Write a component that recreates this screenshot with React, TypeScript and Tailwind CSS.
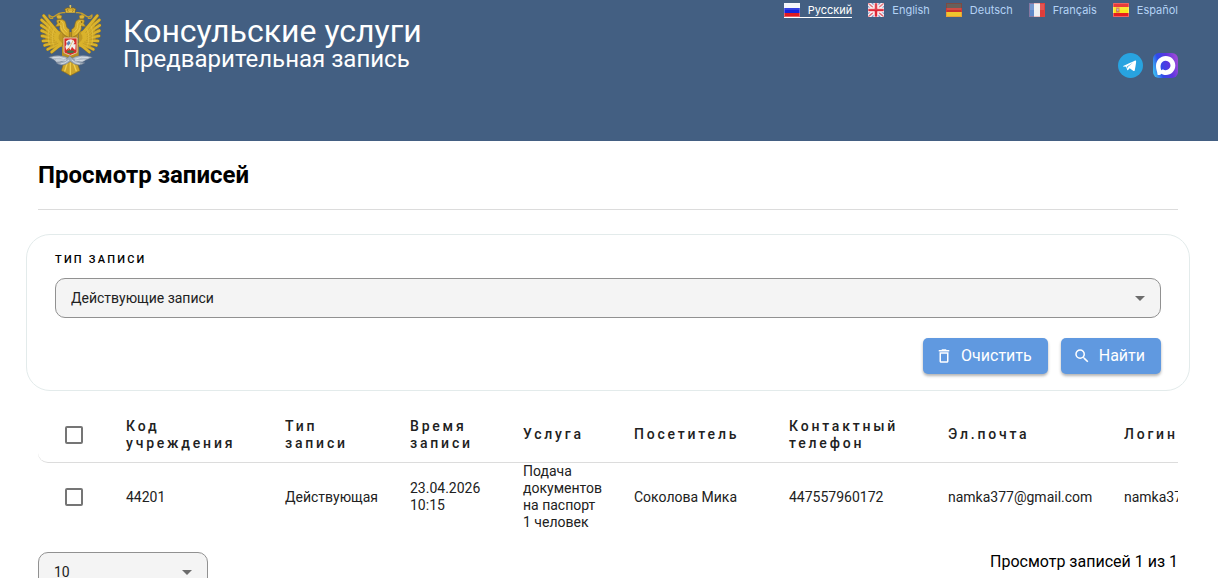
import { useState } from 'react';
import type { ComponentPropsWithoutRef, ReactNode } from 'react';
import { MdDeleteOutline, MdSearch } from 'react-icons/md';

const FEATHERS: [number, number, number, number][] = [
  [86, 100, 41, 47],
  [84, 103, 35, 60],
  [82, 107, 34, 76],
  [82, 111, 35, 92],
  [82, 115, 36, 108],
  [84, 120, 39, 123],
  [86, 124, 44, 136],
  [90, 128, 53, 148],
  [94, 132, 65, 156],
];

function EagleHalf() {
  return (
    <g strokeLinecap="round" strokeLinejoin="round">
      <g stroke="#8a6d22" strokeWidth="10">
        {FEATHERS.map(([a, b, c, d]) => (
          <line key={d} x1={a} y1={b} x2={c} y2={d} />
        ))}
      </g>
      <path d="M50 58Q66 66 72 88L96 96V140L68 146L46 118Z" fill="#c09a24" />
      <g stroke="#dab32c" strokeWidth="8">
        {FEATHERS.map(([a, b, c, d]) => (
          <line key={d} x1={a} y1={b} x2={c} y2={d} />
        ))}
      </g>
      <g stroke="#b18a20" strokeWidth="1.5" fill="none">
        <path d="M42 56L76 98M38 70L72 104M37 86L72 110M38 102L70 115M40 117L74 121M46 131L80 126M55 143L84 130" />
        <path d="M60 78Q50 100 58 134M72 88Q62 108 70 136" stroke="#ecca4c" />
      </g>
      <path d="M104 106C92 96 86 88 90 78L76 80L82 70Q76 60 86 58Q106 56 108 72Q108 84 118 88V112Z" fill="#d7ae2b" stroke="#8a6d22" strokeWidth="2" />
      <path d="M94 64Q102 66 100 76Q98 86 110 96M92 76Q92 92 106 102" fill="none" stroke="#f0d35c" strokeWidth="2" />
      <circle cx="88" cy="66" r="2" fill="#5b4616" />
      <path d="M82 56L78 47Q86 42 96 47L94 56Z" fill="#dcb436" stroke="#7d6220" strokeWidth="1.5" />
      <path d="M87 43V40" stroke="#dcb436" strokeWidth="3" />
      <path d="M104 38Q88 36 78 46Q68 56 57 45Q56 56 68 55" fill="none" stroke="#c49d2c" strokeWidth="4" />
    </g>
  );
}

function Emblem() {
  return (
    <svg viewBox="24 15 195 216" className="h-[72px] w-[65px] shrink-0 overflow-visible" role="img" aria-label="Герб">
      <path d="M104 178L94 212L106 218L121 227L138 218L150 212L138 178Z" fill="#cda42a" stroke="#836820" strokeWidth="2" />
      <path d="M112 188L104 214M121 188V224M130 188L139 214" stroke="#f0cf50" strokeWidth="4" />
      <path d="M96 96H146V168L121 184L96 168Z" fill="#b88f22" />
      <EagleHalf />
      <g transform="translate(243 0) scale(-1 1)">
        <EagleHalf />
      </g>
      <path d="M108 38L104 27Q112 21 121 24Q130 21 138 27L134 38Z" fill="#d6ae32" stroke="#765b19" strokeWidth="2" />
      <path d="M121 24V15M118 18H124M107 36H135" stroke="#edcc55" strokeWidth="3" />
      <path d="M114 26Q110 31 115 36M128 26Q132 31 127 36" fill="none" stroke="#8b6b1c" strokeWidth="2" />
      <path d="M102 114H141V156Q141 160 136 160L121 166L106 160Q102 160 102 156Z" fill="#d72c28" stroke="#e8c5ab" strokeWidth="3" />
      <path d="M106 140L110 132L108 124L115 119L123 118L131 121L134 128L130 133L137 133L136 150L131 146L126 140L122 150L116 143L109 150Z" fill="#eef0ed" />
      <path d="M117 122L110 130L114 137L122 130Z" fill="#5f82b4" />
      <path d="M109 155Q118 147 134 154L128 159H114Z" fill="#44734a" />
      <path d="M130 120L114 151" stroke="#d8a84a" strokeWidth="2" />
      <g stroke="#66758a" strokeWidth="1.5">
        <path d="M56 172Q88 160 121 176Q154 160 187 172Q168 179 157 187Q140 196 121 181Q102 199 82 190Q74 178 56 172Z" fill="#b2bcc7" />
        <path d="M78 188Q98 188 119 168Q140 188 165 188Q143 204 121 184Q98 204 78 188Z" fill="#9facba" />
      </g>
      <path d="M67 173Q90 168 109 178M78 180Q94 180 108 181M134 178Q153 168 176 173M135 182Q148 183 164 180M92 192Q106 191 117 180M150 192Q136 191 125 180" fill="none" stroke="#dbe2e9" strokeWidth="2.5" />
    </svg>
  );
}

type Code = 'ru' | 'en' | 'de' | 'fr' | 'es';

function Flag({ code }: { code: Code }) {
  return (
    <svg viewBox="0 0 16 14" className="h-3.5 w-4 shrink-0" aria-hidden="true">
      {code === 'ru' && (
        <>
          <path fill="#f4f5fa" d="M0 0h16v5H0z" />
          <path fill="#1523dc" d="M0 5h16v5H0z" />
          <path fill="#e01920" d="M0 10h16v4H0z" />
        </>
      )}
      {code === 'en' && (
        <>
          <path fill="#4f62a8" d="M0 0h16v14H0z" />
          <path d="M0 0l16 14M16 0L0 14" stroke="#f5f2f5" strokeWidth="4" />
          <path d="M0 0l16 14M16 0L0 14" stroke="#e26470" strokeWidth="1.4" />
          <path d="M8 0v14M0 7h16" stroke="#fff" strokeWidth="5" />
          <path d="M8 0v14M0 7h16" stroke="#dd2637" strokeWidth="2.6" />
        </>
      )}
      {code === 'de' && (
        <>
          <path fill="#514943" d="M0 0h16v5H0z" />
          <path fill="#c9322a" d="M0 5h16v4H0z" />
          <path fill="#efc52d" d="M0 9h16v5H0z" />
        </>
      )}
      {code === 'fr' && (
        <>
          <path fill="#5f88c8" d="M0 0h5v14H0z" />
          <path fill="#eceef2" d="M5 0h6v14H5z" />
          <path fill="#df3c3a" d="M11 0h5v14h-5z" />
        </>
      )}
      {code === 'es' && (
        <>
          <path fill="#e51f1e" d="M0 0h16v14H0z" />
          <path fill="#fbe51a" d="M0 4h16v6H0z" />
          <path fill="#d8794a" d="M3 4.500h3.500v5H3z" />
          <path fill="#b9b0b4" d="M4 6h1.500v2H4z" />
        </>
      )}
      <path d="M1 1h14v6H1z" fill="#fff" opacity=".13" />
      <path d="M.5.5h15v13H.5z" fill="none" stroke={code === 'fr' || code === 'de' ? '#e0504a' : '#fff'} opacity=".3" />
    </svg>
  );
}

const LANGUAGES: { code: Code; name: string }[] = [
  { code: 'ru', name: 'Русский' },
  { code: 'en', name: 'English' },
  { code: 'de', name: 'Deutsch' },
  { code: 'fr', name: 'Français' },
  { code: 'es', name: 'Español' },
];

function TelegramLogo() {
  return (
    <svg viewBox="0 0 24 24" className="size-[25px]" aria-hidden="true">
      <circle cx="12" cy="12" r="12" fill="#28a3e0" />
      <path
        fill="#fff"
        d="M4.900 12.500C8.400 10.900 13.100 8.900 16 7.500c.9-.4 1.500-.2 1.400.8-.3 2.600-.8 5.900-1.300 8.300-.2.900-.9 1-1.600.5l-3.300-2.400-1.500 1.500c-.4.400-.9.300-1-.300l-.9-2.700-2.800-.3c-.6-.1-.6-.2-.1-.4zm3.800.5l.6 2.200.3-1.900 4.900-4.200z"
      />
    </svg>
  );
}

function MaxLogo() {
  return (
    <svg viewBox="0 0 25 25" className="size-[25px]" aria-hidden="true">
      <defs>
        <linearGradient id="max-fill" x1="0" y1=".7" x2="1" y2=".4">
          <stop offset="0" stopColor="#3cbdf4" />
          <stop offset=".3" stopColor="#2f4be9" />
          <stop offset=".65" stopColor="#5c35df" />
          <stop offset="1" stopColor="#9b49d8" />
        </linearGradient>
      </defs>
      <rect width="25" height="25" rx="6" fill="url(#max-fill)" />
      <path
        fill="#fff"
        fillRule="evenodd"
        d="M12.800 3C18.200 3 22.300 7.200 22.300 12.500S18.200 22 12.900 22c-1.900 0-2.800-.3-4.300-1.300-1 1.200-4 2.100-4.200.5 0-1.200-.3-2.200-.6-3.300-.4-1.400-.8-3-.8-5.200C3 7.300 7.400 3 12.800 3zm.1 4.700c-2.700-.1-4.700 1.700-5.200 4.400-.4 2.200.2 5 .8 5.100.300.100 1-.500 1.400-.9.800.5 1.600.9 2.600.9 2.600.1 4.900-2 5-4.600.1-2.600-2-4.800-4.600-4.900z"
      />
    </svg>
  );
}

type SelectProps = ComponentPropsWithoutRef<'select'> & { children: ReactNode };

function Select({ children, ...props }: SelectProps) {
  return (
    <div className="relative">
      <select
        {...props}
        className="block h-10 w-full appearance-none rounded-[10px] border border-[#919191] bg-[#f4f4f4] pr-10 pl-[15px] text-sm text-[#212121]"
      >
        {children}
      </select>
      <svg viewBox="0 0 10 5" className="pointer-events-none absolute top-[18px] right-4 h-[5px] w-2.5 fill-[#6c6c6c]" aria-hidden="true">
        <path d="M0 0h10L5 5z" />
      </svg>
    </div>
  );
}

function Checkbox({ label }: { label: string }) {
  return (
    <input
      type="checkbox"
      aria-label={label}
      className="mx-auto block size-[18px] appearance-none rounded-[2px] border-2 border-[#757575] bg-white checked:bg-[#6099e0]"
    />
  );
}

const COLUMNS = [
  { title: 'Код учреждения', width: 'w-[159px]' },
  { title: 'Тип записи', width: 'w-[125px]' },
  { title: 'Время записи', width: 'w-[113px]' },
  { title: 'Услуга', width: 'w-[111px]' },
  { title: 'Посетитель', width: 'w-[155px]' },
  { title: 'Контактный телефон', width: 'w-[159px]' },
  { title: 'Эл.почта', width: 'w-[176px]' },
  { title: 'Логин', width: 'w-[176px]' },
];

const ROW = [
  '44201',
  'Действующая',
  '23.04.2026 10:15',
  'Подача документов на паспорт 1 человек',
  'Соколова Мика',
  '447557960172',
  'namka377@gmail.com',
  'namka377@gmail.com',
];

const BUTTON =
  'flex h-9 items-center gap-2 rounded-[5px] bg-[#6099e0] pr-4 pl-3 text-base text-white shadow-[0_2px_3px_rgba(0,0,0,0.3)]';

export default function App() {
  const [kind, setKind] = useState('active');
  return (
    <div className="bg-white font-['Roboto','Liberation_Sans',sans-serif] text-black">
      <header className="flex min-h-[141px] items-start justify-between bg-[#435f82] pr-10 pl-[38px]">
        <a href="#" className="flex items-start gap-5 pt-[5px] text-white">
          <Emblem />
          <span className="flex flex-col pt-3">
            <span className="text-[32px] leading-7">Консульские услуги</span>
            <span className="text-2xl leading-7">Предварительная запись</span>
          </span>
        </a>
        <div className="flex flex-col items-end gap-[35px] pt-[3px]">
          <nav className="flex gap-4 font-['Inter','Liberation_Sans',sans-serif] text-[11px] leading-[14px]">
            {LANGUAGES.map(({ code, name }) => (
              <a
                key={code}
                href={`#${code}`}
                className={
                  code === 'ru'
                    ? 'flex gap-2 border-b border-white text-white'
                    : 'flex gap-2 border-b border-transparent text-[#b4d2f5]'
                }
              >
                <Flag code={code} />
                {name}
              </a>
            ))}
          </nav>
          <div className="flex gap-2.5">
            <a href="#telegram" aria-label="Telegram">
              <TelegramLogo />
            </a>
            <a href="#max" aria-label="MAX">
              <MaxLogo />
            </a>
          </div>
        </div>
      </header>

      <main className="pr-10 pl-[38px]">
        <h1 className="border-b border-[#dcdcdc] pt-5 pb-5 text-2xl leading-7 font-bold">Просмотр записей</h1>

        <form
          className="-mx-3 mt-6 rounded-[24px] border border-[#e3ebeb] px-7 pt-4 pb-4"
          onSubmit={(event) => event.preventDefault()}
        >
          <label htmlFor="kind" className="mb-[9px] block text-[11px] leading-[18px] font-medium tracking-[0.2em] uppercase">
            Тип записи
          </label>
          <Select id="kind" value={kind} onChange={(event) => setKind(event.target.value)}>
            <option value="active">Действующие записи</option>
            <option value="archive">Архивные записи</option>
          </Select>
          <div className="mt-5 flex justify-end gap-[13px]">
            <button type="button" className={BUTTON} onClick={() => setKind('active')}>
              <MdDeleteOutline size={18} />
              Очистить
            </button>
            <button type="submit" className={BUTTON}>
              <MdSearch size={18} />
              Найти
            </button>
          </div>
        </form>

        <div className="mt-4 overflow-hidden">
          <table className="w-[1246px] table-fixed border-separate border-spacing-0 text-left text-sm leading-[17px] text-[#212121]">
            <thead>
              <tr className="h-14">
                <th className="w-[72px] rounded-bl-[10px] border-b border-[#dcdcdc]">
                  <Checkbox label="Выбрать все" />
                </th>
                {COLUMNS.map(({ title, width }) => (
                  <th key={title} className={`${width} border-b border-[#dcdcdc] pr-3 pl-4 font-medium tracking-[0.2em]`}>
                    {title}
                  </th>
                ))}
              </tr>
            </thead>
            <tbody>
              <tr className="h-[68px]">
                <td>
                  <Checkbox label="Выбрать запись" />
                </td>
                {ROW.map((value, index) => (
                  <td key={index} className="pr-3 pl-4">
                    {value}
                  </td>
                ))}
              </tr>
            </tbody>
          </table>
        </div>

        <div className="mt-[21px] flex items-start justify-between pb-6">
          <div className="w-[170px]">
            <Select aria-label="Записей на странице" defaultValue="10">
              <option>10</option>
              <option>25</option>
              <option>50</option>
            </Select>
          </div>
          <p className="text-base leading-5">Просмотр записей 1 из 1</p>
        </div>
      </main>
    </div>
  );
}
